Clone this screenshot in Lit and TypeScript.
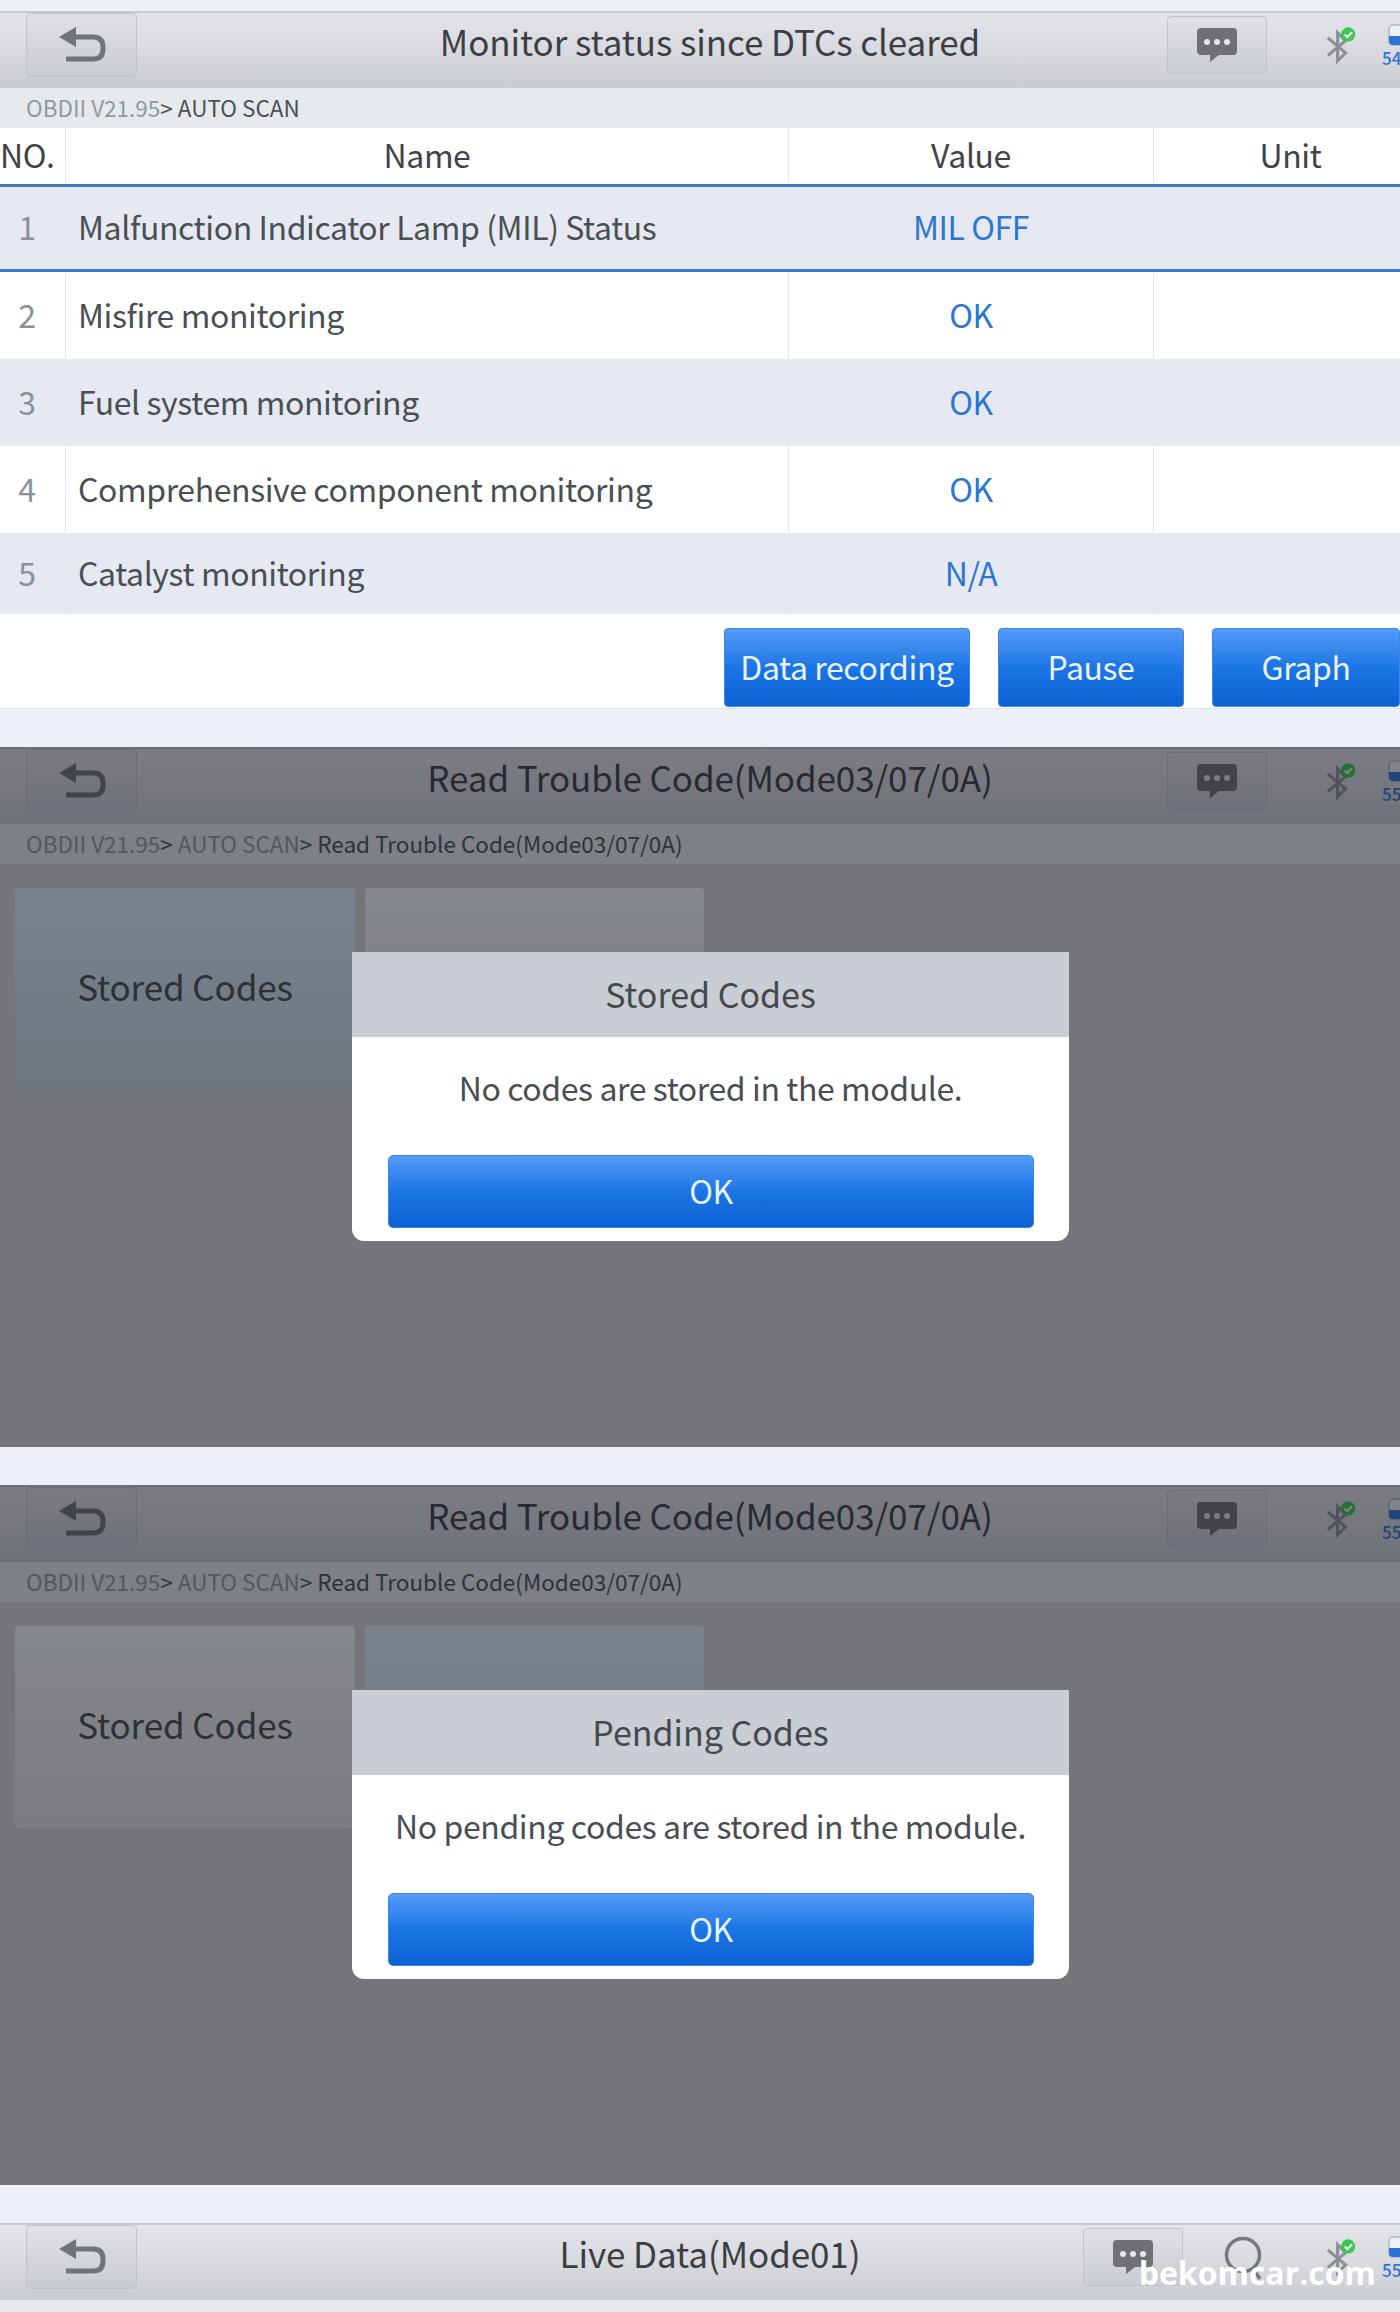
import { LitElement, html, css, nothing } from 'lit';
import { customElement, property } from 'lit/decorators.js';

const backIcon = html`<svg width="48" height="36" viewBox="0 0 48 36">
  <path d="M1 10 18 0V20Z" fill="#6f7478" />
  <path d="M14 10H35Q45 10 45 20V22Q45 32 35 32H8" fill="none" stroke="#6f7478" stroke-width="5" />
</svg>`;

const chatIcon = html`<svg width="40" height="34" viewBox="0 0 40 34">
  <path d="M4 0H36Q40 0 40 4V23Q40 27 36 27H22L13 34V27H4Q0 27 0 23V4Q0 0 4 0Z" fill="#6e7074" />
  <circle cx="10" cy="14" r="3" fill="#e4e6ea" />
  <circle cx="20" cy="14" r="3" fill="#e4e6ea" />
  <circle cx="30" cy="14" r="3" fill="#e4e6ea" />
</svg>`;

const searchIcon = html`<svg width="42" height="48" viewBox="0 0 42 48">
  <circle cx="19" cy="19" r="16.5" fill="none" stroke="#75787c" stroke-width="3.5" />
  <path d="M29 32 36 43" fill="none" stroke="#75787c" stroke-width="3.5" />
</svg>`;

const btIcon = html`<svg width="34" height="40" viewBox="0 0 34 40">
  <path d="M1 12 21 29 12 38V6L21 15 1 32" fill="none" stroke="#8b8e92" stroke-width="3.4" />
  <circle cx="24" cy="8" r="8" fill="#3cc653" />
  <path d="M20 8 23 11 28.500 5.500" fill="none" stroke="#e9fbe9" stroke-width="2.400" />
</svg>`;

const batteryIcon = html`<svg class="cell" width="24" height="22" viewBox="0 0 24 22">
  <rect x="1" y="1" width="22" height="20" rx="4" fill="#eef1f5" stroke="#a9b6c8" stroke-width="1.500" />
  <path d="M1 12H23V17Q23 21 19 21H5Q1 21 1 17Z" fill="#2b74d6" />
</svg>`;

@customElement('tool-bar')
export class ToolBar extends LitElement {
  @property() heading = '';
  @property() battery = '54';
  @property({ type: Boolean }) search = false;

  static styles = css`
    :host {
      display: grid;
      grid-template-columns: 340px 1fr 320px;
      align-items: center;
      height: 77px;
      box-sizing: border-box;
      padding-bottom: 17px;
      border-top: 2px solid #c6c9cf;
      background: linear-gradient(#e2e4e9, #d8dadf 50%, #c9ccd1);
      overflow: hidden;
    }
    .left {
      display: flex;
      padding-left: 26px;
    }
    .btn {
      display: flex;
      align-items: center;
      justify-content: center;
      flex: none;
      box-sizing: border-box;
      border: 1px solid #c0c3c8;
      border-radius: 4px;
      background: linear-gradient(#dfe1e5, #c9ccd1);
    }
    .back {
      width: 111px;
      height: 64px;
    }
    .chat {
      width: 100px;
      height: 58px;
    }
    h1 {
      margin: 0;
      padding-bottom: 9px;
      font-size: 35px;
      font-weight: 400;
      letter-spacing: -0.1px;
      text-align: center;
      white-space: nowrap;
      color: #3b3e42;
    }
    .right {
      display: flex;
      align-items: center;
      justify-content: flex-end;
    }
    .search {
      display: flex;
      flex: none;
      margin: 6px 0 0 41px;
    }
    .bt {
      display: flex;
      flex: none;
      width: 30px;
      margin-left: 60px;
    }
    .search + .bt {
      margin-left: 61px;
    }
    .battery {
      flex: none;
      width: 18px;
      margin-left: 25px;
      overflow: hidden;
      line-height: 1;
    }
    .battery svg {
      display: block;
      margin-left: 6px;
    }
    .battery span {
      display: block;
      margin-top: 3px;
      font-size: 17px;
      font-weight: 500;
      color: #2b74d6;
      white-space: nowrap;
    }
  `;

  render() {
    return html`
      <div class="left"><div class="btn back">${backIcon}</div></div>
      <h1>${this.heading}</h1>
      <div class="right">
        <div class="btn chat">${chatIcon}</div>
        ${this.search ? html`<div class="search">${searchIcon}</div>` : nothing}
        <div class="bt">${btIcon}</div>
        <div class="battery">${batteryIcon}<span>${this.battery}</span></div>
      </div>
    `;
  }
}

@customElement('bread-crumb')
export class BreadCrumb extends LitElement {
  @property({ type: Array }) items: string[] = [];

  static styles = css`
    :host {
      display: block;
      height: 40px;
      line-height: 38px;
      padding-left: 26px;
      background: #e6eaec;
      font-size: 22.500px;
      color: #8e9aa1;
      white-space: nowrap;
    }
    b {
      font-weight: 400;
      color: #4a4f54;
    }
  `;

  render() {
    const last = this.items.length - 1;
    return html`${this.items.map((item, i) =>
      i === last ? html`<b>${item}</b>` : html`${item}<b>&gt; </b>`
    )}`;
  }
}

type Row = { no: number; name: string; value: string };

const ROWS: Row[] = [
  { no: 1, name: 'Malfunction Indicator Lamp (MIL) Status', value: 'MIL OFF' },
  { no: 2, name: 'Misfire monitoring', value: 'OK' },
  { no: 3, name: 'Fuel system monitoring', value: 'OK' },
  { no: 4, name: 'Comprehensive component monitoring', value: 'OK' },
  { no: 5, name: 'Catalyst monitoring', value: 'N/A' },
];

@customElement('monitor-table')
export class MonitorTable extends LitElement {
  static styles = css`
    :host {
      display: block;
      background: #fff;
      overflow: hidden;
      font-size: 32px;
      letter-spacing: -0.4px;
    }
    .row {
      display: grid;
      grid-template-columns: 65px 723px 365px 274px;
      height: 87px;
      box-sizing: border-box;
    }
    .row > div {
      display: flex;
      align-items: center;
      justify-content: center;
      box-sizing: border-box;
      padding-bottom: 4px;
      border-left: 1px solid #e4e7ec;
      white-space: nowrap;
    }
    .row > div:first-child {
      border-left: 0;
    }
    .head {
      height: 56px;
      color: #3f4346;
    }
    .head > div:first-child {
      justify-content: flex-start;
    }
    .even {
      background: #e6e9f2;
    }
    .selected {
      height: 88px;
      border-top: 3px solid #3d79c9;
      border-bottom: 3px solid #3d79c9;
    }
    .row.last {
      height: 81px;
    }
    .row > .no {
      padding-right: 11px;
      color: #8a9197;
    }
    .row > .name {
      justify-content: flex-start;
      padding-left: 12px;
      color: #4a4f53;
    }
    .value {
      color: #2b76d2;
    }
    .actions {
      display: flex;
      justify-content: flex-end;
      gap: 28px;
      height: 95px;
      box-sizing: border-box;
      padding-top: 14px;
      border-bottom: 1px solid #dfe2e7;
    }
    .action {
      display: flex;
      align-items: center;
      justify-content: center;
      height: 79px;
      padding-bottom: 4px;
      border-radius: 4px;
      border: 1px solid #3f86e0;
      box-sizing: border-box;
      background: linear-gradient(#559cf8, #1c75e4 50%, #0a62d4);
      color: #e8f3ff;
    }
    .record {
      width: 246px;
    }
    .pause {
      width: 186px;
    }
    .graph {
      width: 188px;
    }
  `;

  render() {
    return html`
      <div class="row head">
        <div>NO.</div>
        <div>Name</div>
        <div>Value</div>
        <div>Unit</div>
      </div>
      ${ROWS.map(
        (r, i) => html`
          <div
            class="row ${i % 2 === 0 ? 'even' : ''} ${i === 0 ? 'selected' : ''} ${i === ROWS.length - 1
              ? 'last'
              : ''}"
          >
            <div class="no">${r.no}</div>
            <div class="name">${r.name}</div>
            <div class="value">${r.value}</div>
            <div></div>
          </div>
        `
      )}
      <div class="actions">
        <div class="action record">Data recording</div>
        <div class="action pause">Pause</div>
        <div class="action graph">Graph</div>
      </div>
    `;
  }
}

@customElement('code-screen')
export class CodeScreen extends LitElement {
  @property() heading = '';
  @property() message = '';
  @property({ type: Number }) active = 0;
  @property() battery = '55';

  static styles = css`
    :host {
      display: block;
      position: relative;
      height: 700px;
      background: #d4d5d6;
    }
    .tiles {
      display: grid;
      grid-template-columns: 340px 339px;
      gap: 10px;
      padding: 24px 0 0 15px;
    }
    .tile {
      display: flex;
      align-items: center;
      justify-content: center;
      height: 202px;
      box-sizing: border-box;
      padding-bottom: 8px;
      border-radius: 4px;
      background: linear-gradient(#f4f8f8, #e2e2e4);
      font-size: 35px;
      letter-spacing: -0.1px;
      color: #454a50;
    }
    .tile.on {
      background: linear-gradient(#e0eefc, #c8d8e2);
    }
    .overlay {
      position: absolute;
      inset: 0;
      display: flex;
      justify-content: center;
      align-items: flex-start;
      padding: 205px 0 0 21px;
      box-sizing: border-box;
      background: rgba(20, 22, 30, 0.5);
    }
    .dialog {
      width: 717px;
      height: 289px;
      border-radius: 0 0 12px 12px;
      background: #fff;
      overflow: hidden;
      font-size: 32px;
      letter-spacing: -0.4px;
      color: #4a4d52;
    }
    .dialog h2 {
      display: flex;
      align-items: center;
      justify-content: center;
      margin: 0;
      height: 85px;
      box-sizing: border-box;
      padding-bottom: 3px;
      background: #c9cdd4;
      font-size: 34px;
      font-weight: 400;
      letter-spacing: 0;
      color: #45484d;
    }
    .msg {
      height: 118px;
      padding-top: 27px;
      box-sizing: border-box;
      text-align: center;
      white-space: nowrap;
    }
    .ok {
      display: flex;
      align-items: center;
      justify-content: center;
      height: 73px;
      margin: 0 35px 0 36px;
      padding-bottom: 3px;
      border-radius: 5px;
      border: 1px solid #3f86e0;
      box-sizing: border-box;
      background: linear-gradient(#559cf8, #1c75e4 50%, #0a62d4);
      color: #e8f3ff;
    }
  `;

  render() {
    const path = ['OBDII V21.95', 'AUTO SCAN', this.heading];
    return html`
      <tool-bar .heading=${this.heading} .battery=${this.battery}></tool-bar>
      <bread-crumb .items=${path}></bread-crumb>
      <div class="tiles">
        <div class="tile ${this.active === 0 ? 'on' : ''}">Stored Codes</div>
        <div class="tile ${this.active === 1 ? 'on' : ''}"></div>
      </div>
      <div class="overlay">
        <div class="dialog">
          <h2>${this.active === 0 ? 'Stored Codes' : 'Pending Codes'}</h2>
          <div class="msg">${this.message}</div>
          <div class="ok">OK</div>
        </div>
      </div>
    `;
  }
}

@customElement('app-root')
export class AppRoot extends LitElement {
  static styles = css`
    :host {
      display: block;
      position: relative;
      height: 2312px;
      padding-top: 11px;
      box-sizing: border-box;
      overflow: hidden;
      background: #edf0f6;
      font-family: 'Noto Sans CJK SC', 'Noto Sans', sans-serif;
    }
    .gap {
      height: 38px;
    }
    .watermark {
      position: absolute;
      right: 24px;
      bottom: 20px;
      font-family: 'Open Sans', sans-serif;
      font-size: 32px;
      font-weight: 700;
      line-height: 1.2;
      color: #fff;
    }
  `;

  render() {
    const title = 'Read Trouble Code(Mode03/07/0A)';
    return html`
      <tool-bar heading="Monitor status since DTCs cleared" battery="54"></tool-bar>
      <bread-crumb .items=${['OBDII V21.95', 'AUTO SCAN']}></bread-crumb>
      <monitor-table></monitor-table>
      <div class="gap"></div>
      <code-screen .heading=${title} message="No codes are stored in the module." .active=${0}></code-screen>
      <div class="gap"></div>
      <code-screen
        .heading=${title}
        message="No pending codes are stored in the module."
        .active=${1}
      ></code-screen>
      <div class="gap"></div>
      <tool-bar heading="Live Data(Mode01)" battery="55" search></tool-bar>
      <bread-crumb .items=${['OBDII V21.95', 'AUTO SCAN']}></bread-crumb>
      <div class="watermark">bekomcar.com</div>
    `;
  }
}
